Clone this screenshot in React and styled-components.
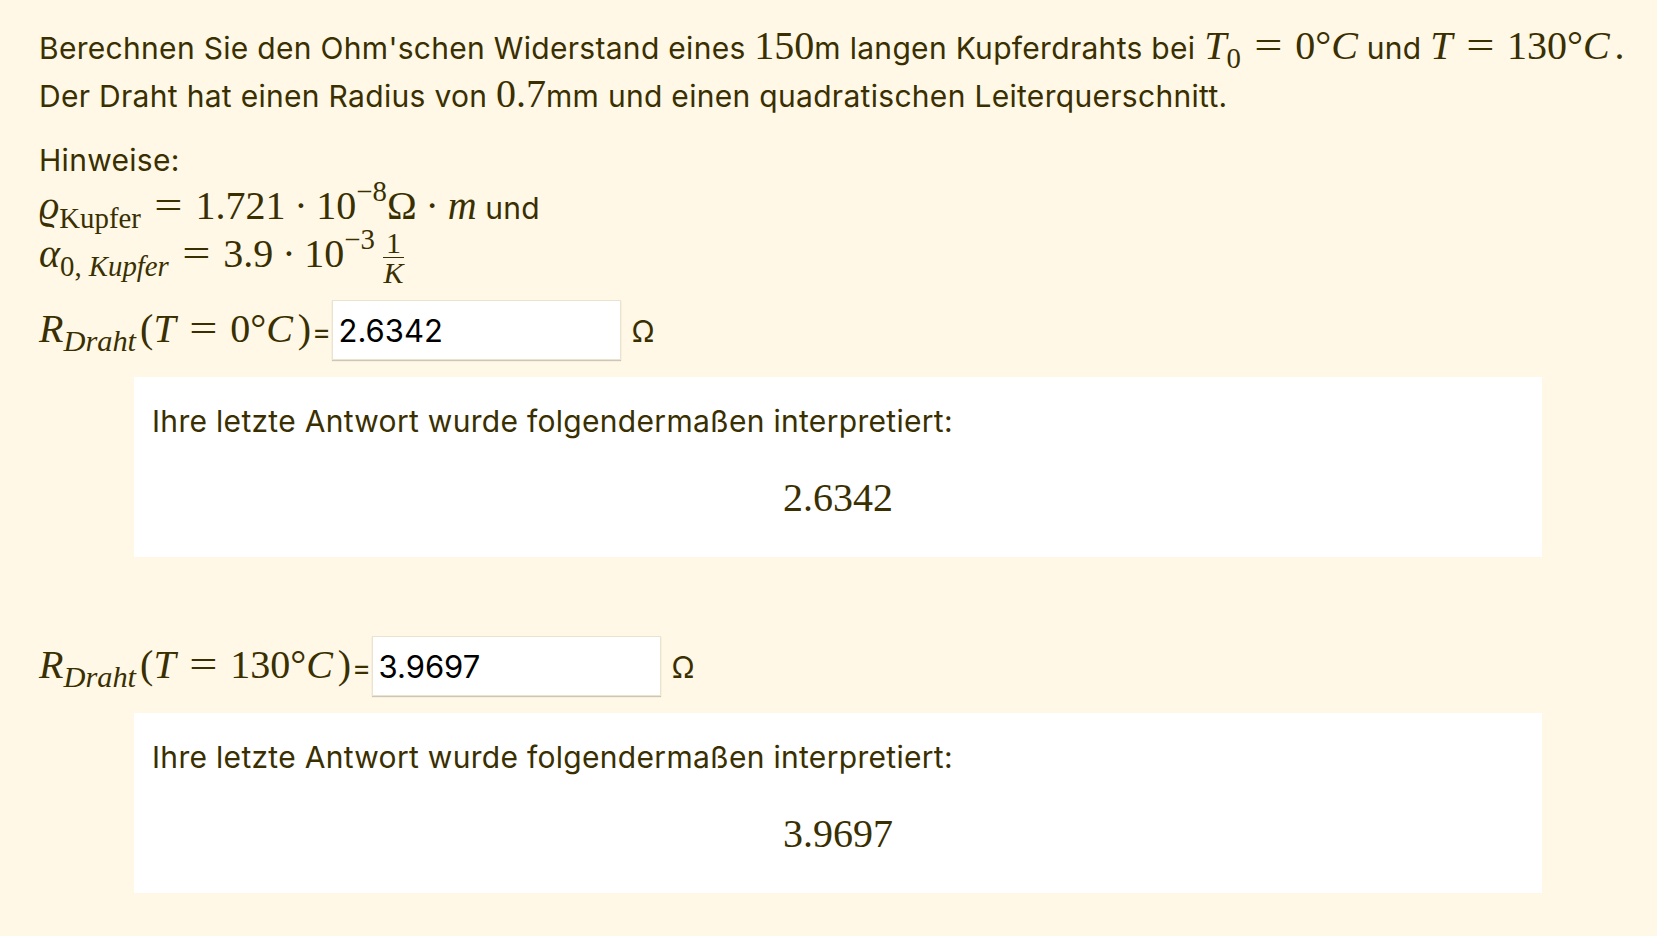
import React from 'react';
import styled, { createGlobalStyle } from 'styled-components';

const GlobalStyle = createGlobalStyle`
  html, body {
    margin: 0;
    background: #fff8e7;
  }
`;

const App = () => (
  <>
    <GlobalStyle />
    <Page>
      <Para>
        Berechnen Sie den Ohm'schen Widerstand eines <M>150</M>m langen Kupferdrahts bei{' '}
        <M><I>T</I><Sub>0</Sub><Rel>=</Rel>0°<I>C</I></M> und{' '}
        <M><I>T</I><Rel>=</Rel>130°<I $corr>C</I>.</M>
        <br />
        Der Draht hat einen Radius von <M>0.7</M>mm und einen quadratischen Leiterquerschnitt.
      </Para>

      <Hints>
        Hinweise:
        <br />
        <M>
          <I>ϱ</I><Sub>Kupfer</Sub><Rel>=</Rel>1.721<Bin>·</Bin>10<Sup>−8</Sup>Ω<Bin>·</Bin><I>m</I>
        </M>{' '}
        und
        <br />
        <M>
          <I>α</I><Sub>0, <I>Kupfer</I></Sub><Rel>=</Rel>3.9<Bin>·</Bin>10<Sup>−3</Sup>
          <Frac>
            <Num>1</Num>
            <Den><I>K</I></Den>
          </Frac>
        </M>
      </Hints>

      <AnswerRow>
        <M><I>R</I><Sub $italic>Draht</Sub>(<I>T</I><Rel>=</Rel>0°<I $corr>C</I>)</M>
        <Equals>=</Equals>
        <AnswerInput defaultValue="2.6342" />
        <Unit>Ω</Unit>
      </AnswerRow>
      <Feedback>
        <FeedbackText>Ihre letzte Antwort wurde folgendermaßen interpretiert:</FeedbackText>
        <FeedbackValue>2.6342</FeedbackValue>
      </Feedback>

      <AnswerRow $gap>
        <M><I>R</I><Sub $italic>Draht</Sub>(<I>T</I><Rel>=</Rel>130°<I $corr>C</I>)</M>
        <Equals>=</Equals>
        <AnswerInput defaultValue="3.9697" />
        <Unit>Ω</Unit>
      </AnswerRow>
      <Feedback>
        <FeedbackText>Ihre letzte Antwort wurde folgendermaßen interpretiert:</FeedbackText>
        <FeedbackValue>3.9697</FeedbackValue>
      </Feedback>
    </Page>
  </>
);

export default App;

const Page = styled.div`
  padding: 24px 0 40px 39px;
  color: #3a2f00;
  font-family: Inter, "Liberation Sans", sans-serif;
  font-size: 30px;
  letter-spacing: 0.3px;
`;

const Para = styled.p`
  margin: 0;
  line-height: 48px;
  white-space: nowrap;
`;

const Hints = styled(Para)`
  margin-top: 16px;
`;

const M = styled.span`
  font-family: "Liberation Serif", "DejaVu Serif", serif;
  font-size: 40px;
  line-height: 1;
  letter-spacing: 0;
  white-space: nowrap;
`;

// italic variable; $corr adds the small italic correction before upright glyphs
const I = styled.span`
  font-style: italic;
  margin-right: ${(p) => (p.$corr ? '0.12em' : '0')};
`;

const Sub = styled.span`
  font-size: ${(p) => (p.$italic ? '0.76em' : '0.72em')};
  line-height: 0;
  vertical-align: -0.3em;
  margin-right: ${(p) => (p.$italic ? '4px' : '0')};
  font-style: ${(p) => (p.$italic ? 'italic' : 'normal')};
`;

const Sup = styled.span`
  font-size: 0.72em;
  line-height: 0;
  vertical-align: 0.62em;
`;

const Rel = styled.span`
  display: inline-block;
  margin: 0 0.4em;
  transform: scaleX(1.25);
`;

const Bin = styled.span`
  margin: 0 0.22em;
`;

const Frac = styled.span`
  display: inline-flex;
  flex-direction: column;
  align-items: center;
  vertical-align: middle;
  margin: -16px 0 -16px 8px;
  font-size: 30px;
  line-height: 0.92;
`;

const Num = styled.span`
  padding: 0 3px 1px;
  border-bottom: 1.5px solid currentColor;
`;

const Den = styled.span`
  padding-top: 1px;
`;

const AnswerRow = styled.div`
  display: flex;
  align-items: baseline;
  margin-top: ${(p) => (p.$gap ? '79px' : '20px')};
`;

const Equals = styled.span`
  font-size: 29px;
  margin: 0 0 0 1px;
`;

const AnswerInput = styled.input`
  box-sizing: border-box;
  width: 289px;
  height: 60px;
  padding: 0 6px;
  border: 1px solid #ebe3cd;
  box-shadow: 0 1px 1px rgba(0, 0, 0, 0.2);
  background: #fff;
  color: #000;
  font-family: Inter, "Liberation Sans", sans-serif;
  font-size: 31px;
  outline: none;
`;

const Unit = styled.span`
  margin-left: 11px;
  font-size: 30px;
`;

const Feedback = styled.div`
  box-sizing: border-box;
  width: 1408px;
  margin: 17px 0 0 95px;
  padding: 27px 18px 35px;
  background: #fff;
`;

const FeedbackText = styled.div`
  line-height: 34px;
`;

const FeedbackValue = styled.div`
  margin-top: 36px;
  text-align: center;
  font-family: "Liberation Serif", "DejaVu Serif", serif;
  font-size: 40px;
  line-height: 48px;
  letter-spacing: 0;
`;
